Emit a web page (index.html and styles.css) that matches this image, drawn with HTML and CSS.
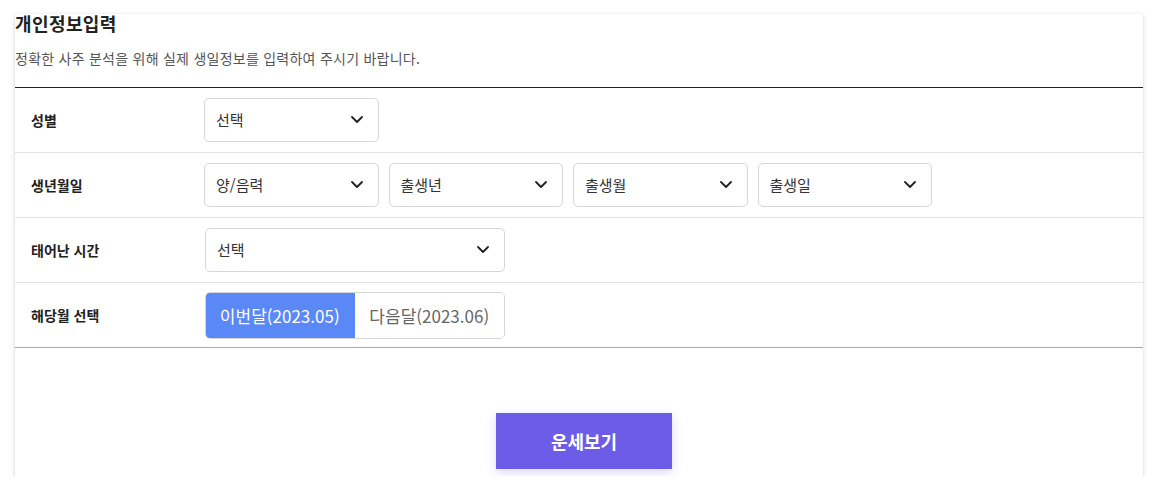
FILE: index.html
```html
<!DOCTYPE html>
<html lang="ko">
<head>
<meta charset="utf-8">
<link rel="stylesheet" href="styles.css">
</head>
<body>
<div class="page">
  <div class="card">
    <h2 class="title">개인정보입력</h2>
    <p class="desc">정확한 사주 분석을 위해 실제 생일정보를 입력하여 주시기 바랍니다.</p>
    <div class="form">
      <div class="row">
        <div class="label">성별</div>
        <div class="fields">
          <div class="select">선택<svg class="chev" viewBox="0 0 12 7"><path d="M1 1l5 5 5-5"/></svg></div>
        </div>
      </div>
      <div class="row">
        <div class="label">생년월일</div>
        <div class="fields">
          <div class="select">양/음력<svg class="chev" viewBox="0 0 12 7"><path d="M1 1l5 5 5-5"/></svg></div>
          <div class="select">출생년<svg class="chev" viewBox="0 0 12 7"><path d="M1 1l5 5 5-5"/></svg></div>
          <div class="select">출생월<svg class="chev" viewBox="0 0 12 7"><path d="M1 1l5 5 5-5"/></svg></div>
          <div class="select">출생일<svg class="chev" viewBox="0 0 12 7"><path d="M1 1l5 5 5-5"/></svg></div>
        </div>
      </div>
      <div class="row">
        <div class="label">태어난 시간</div>
        <div class="fields shift">
          <div class="select wide">선택<svg class="chev" viewBox="0 0 12 7"><path d="M1 1l5 5 5-5"/></svg></div>
        </div>
      </div>
      <div class="row last">
        <div class="label">해당월 선택</div>
        <div class="fields shift">
          <div class="toggle">
            <span class="opt active">이번달(2023.05)</span>
            <span class="opt">다음달(2023.06)</span>
          </div>
        </div>
      </div>
    </div>
    <div class="actions">
      <button class="submit">운세보기</button>
    </div>
  </div>
</div>
</body>
</html>
```

FILE: styles.css
```css
* { box-sizing: border-box; }
html, body { margin: 0; padding: 0; background: #fff; }
body { font-family: "Noto Sans CJK KR", "Noto Sans", sans-serif; color: #222; }
.page { padding: 15px 15px 0 15px; }
.card {
  width: 1128px;
  height: 462px;
  background: #fff;
  box-shadow: 0 2px 5px rgba(0,0,0,0.14), 0 0 2px rgba(0,0,0,0.08);
}
.title {
  margin: -1px 0 0 0;
  font-size: 18px;
  font-weight: 700;
  line-height: 18px;
  letter-spacing: 0.4px;
  color: #222;
}
.desc {
  margin: 16px 0 0 0;
  font-size: 14px;
  line-height: 20px;
  letter-spacing: 0.25px;
  color: #555;
}
.form {
  margin-top: 19px;
  border-top: 1px solid #222;
}
.row {
  display: flex;
  align-items: center;
  height: 65px;
  border-bottom: 1px solid #e2e2e2;
}
.row.last { border-bottom-color: #a9a9a9; }
.label {
  width: 189px;
  padding-left: 16px;
  font-size: 14px;
  font-weight: 700;
  color: #222;
}
.fields { display: flex; gap: 10px; }
.fields.shift { margin-left: 1px; }
.select {
  width: 174.5px;
  height: 44px;
  margin-top: -1px;
  border: 1px solid #d6d6d6;
  border-radius: 5px;
  display: flex;
  align-items: center;
  justify-content: space-between;
  padding: 0 15px 0 11px;
  font-size: 15px;
  color: #333;
  background: #fff;
}
.select.wide { width: 300px; }
.chev { width: 12px; height: 7px; fill: none; stroke: #222; stroke-width: 1.8; stroke-linecap: round; stroke-linejoin: round; }
.toggle {
  display: flex;
  width: 300px;
  height: 47px;
  border: 1px solid #d6d6d6;
  border-radius: 5px;
  overflow: hidden;
}
.opt {
  flex: 1;
  display: flex;
  align-items: center;
  justify-content: center;
  font-size: 17px;
  color: #666;
  background: #fff;
}
.opt.active {
  background: #5a88f6;
  color: #fff;
  margin: -1px 0 -1px -1px;
  box-shadow: 0 2px 6px rgba(90,136,246,0.25);
}
.actions {
  display: flex;
  justify-content: center;
  padding-left: 10px;
  margin-top: 65px;
}
.submit {
  width: 176px;
  height: 56px;
  border: none;
  background: #6d5ce8;
  color: #fff;
  font-family: inherit;
  font-size: 18px;
  font-weight: 700;
  box-shadow: 0 3px 10px rgba(109,92,232,0.25);
}
```
